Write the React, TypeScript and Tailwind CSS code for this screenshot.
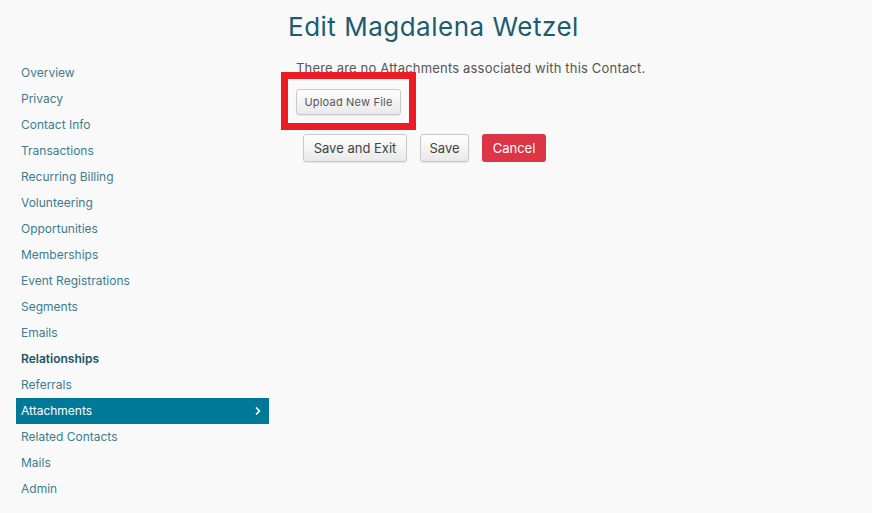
import { ChevronRight } from "lucide-react";

const navItems = [
  "Overview",
  "Privacy",
  "Contact Info",
  "Transactions",
  "Recurring Billing",
  "Volunteering",
  "Opportunities",
  "Memberships",
  "Event Registrations",
  "Segments",
  "Emails",
  "Relationships",
  "Referrals",
  "Attachments",
  "Related Contacts",
  "Mails",
  "Admin",
];

export default function App() {
  return (
    <div className="relative min-h-screen bg-[#f9f9f9] font-['Inter',sans-serif]">
      {/* Header */}
      <div className="h-[59px] pt-[11px] pl-[288px]">
        <h1 className="text-[26px] leading-[32px] tracking-[0.5px] text-[#1d5c70] font-normal">
          Edit Magdalena Wetzel
        </h1>
      </div>

      <div className="flex">
        {/* Sidebar */}
        <nav className="ml-4 w-[253px] pt-px">
          {navItems.map((item) => {
            const active = item === "Attachments";
            const bold = item === "Relationships";
            return (
              <div
                key={item}
                className={`flex h-[26px] items-center justify-between pl-[5px] pr-[5px] text-[12px] ${
                  active
                    ? "bg-[#007898] text-white"
                    : bold
                    ? "font-semibold text-[#1b5465]"
                    : "text-[#3d7c8f]"
                }`}
              >
                <span>{item}</span>
                {active && <ChevronRight className="h-3 w-3" strokeWidth={3.5} />}
              </div>
            );
          })}
        </nav>

        {/* Main */}
        <main className="ml-[27px] -mt-px">
          <p className="text-[13px] leading-[20px] tracking-[0.18px] text-[#555]">
            There are no Attachments associated with this Contact.
          </p>
          <div className="mt-[10px]">
            <button className="h-[26px] w-[105px] rounded-[3px] border border-[#c9c9c9] bg-gradient-to-b from-white to-[#e9e9e9] text-[11px] tracking-[0.2px] text-[#555] shadow-[0_1px_1px_rgba(0,0,0,0.08)]">
              Upload New File
            </button>
          </div>
          <div className="mt-[19px] flex gap-[13px] pl-[7px]">
            <button className="h-7 w-[104px] rounded-[3px] border border-[#c9c9c9] bg-gradient-to-b from-white to-[#e9e9e9] text-[13px] text-[#444] shadow-[0_1px_1px_rgba(0,0,0,0.08)]">
              Save and Exit
            </button>
            <button className="h-7 w-[49px] rounded-[3px] border border-[#c9c9c9] bg-gradient-to-b from-white to-[#e9e9e9] text-[13px] text-[#444] shadow-[0_1px_1px_rgba(0,0,0,0.08)]">
              Save
            </button>
            <button className="h-7 w-16 rounded-[3px] bg-[#dc3545] text-[13px] text-white">
              Cancel
            </button>
          </div>
        </main>
      </div>

      {/* Highlight annotation */}
      <div className="pointer-events-none absolute left-[281px] top-[72px] h-[58px] w-[135px] border-[7px] border-[#ed1c24]" />
    </div>
  );
}
